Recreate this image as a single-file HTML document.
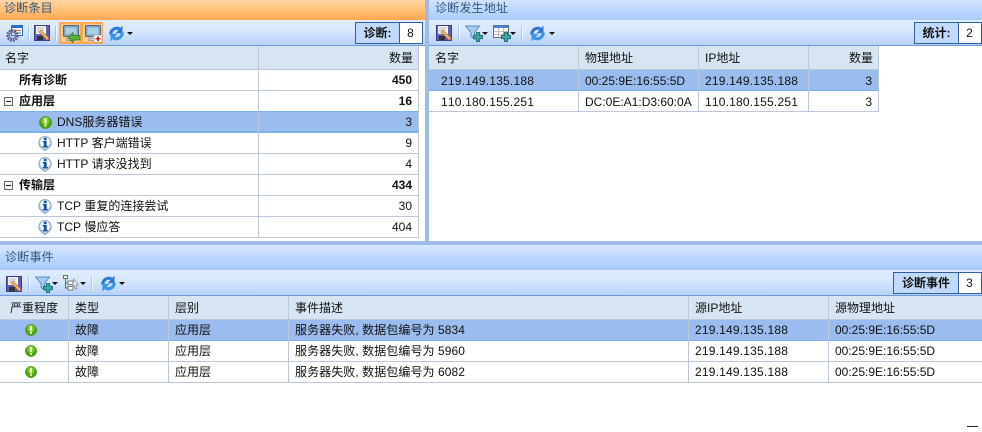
<!DOCTYPE html>
<html lang="zh"><head><meta charset="utf-8">
<style>
html,body{margin:0;padding:0;background:#fff;}
#p{position:relative;width:982px;height:432px;overflow:hidden;background:#fff;font:12px/21px "Liberation Sans","Noto Sans CJK SC","WenQuanYi Zen Hei",sans-serif;color:#111;font-kerning:none;}
#p div,#p svg{position:absolute;}
.tt{line-height:17px;color:#37577f;white-space:nowrap;font-size:12.2px;}
.tb{background:linear-gradient(#e0ecff,#d9e8fe 40%,#b6d2f8);border-bottom:1px solid #6d9ad8;}
.sep{width:1px;background:#a9c5ea;border-right:1px solid #f2f7ff;}
.t{white-space:nowrap;height:21px;}
.n{letter-spacing:.2px;}
.d{letter-spacing:.07px;}
.r{text-align:right;}
.b{font-weight:bold;}
.h{background:#d7e4f2;}
.ln{background:#bcc8da;height:1px;}
.vl{background:#bcc8da;width:1px;}
.sel{background:#9bbcee;}
.ar{width:0;height:0;border:3px solid transparent;border-top:3px solid #111;border-bottom:0;}
.box{border:1px solid #2f5f9f;box-sizing:border-box;background:#fff;}
.box .l{left:0;top:0;bottom:0;background:#c2dafa;border-right:1px solid #2f5f9f;text-align:center;font-weight:bold;line-height:20px;white-space:nowrap;}
.box .v{right:0;top:0;bottom:0;text-align:center;line-height:20px;}
</style></head><body>
<div id="p">
<svg width="0" height="0" style="left:0;top:0">
<defs>
<symbol id="save" viewBox="0 0 16 16"><rect x="0.5" y="0.5" width="15" height="15" fill="#6060b4" stroke="#3c3c84"/><rect x="2" y="1" width="10" height="8" fill="#f2f2f2"/><path d="M3 3h7M3 5h7M3 7h5" stroke="#aaa" stroke-width=".8"/><rect x="3" y="11" width="6" height="4" fill="#333"/><path d="M7 5l8.500 8.500-2 2L5 7z" fill="#e8b060" stroke="#a06020" stroke-width=".5"/><path d="M13.500 13.500l2 0 0 2z" fill="#d04040"/></symbol>
<symbol id="ref" viewBox="0 0 17 17"><path d="M2.800 9.500A6 6 0 0 1 11.500 3.900" fill="none" stroke="#2b79d4" stroke-width="3.200"/><path d="M14.500 .5V8.200H7.500z" fill="#2b79d4"/><path d="M14.200 7.500A6 6 0 0 1 5.500 13.100" fill="none" stroke="#3a94e6" stroke-width="3.200"/><path d="M2.500 16.500V8.800H9.500z" fill="#3a94e6"/></symbol>
<symbol id="plus" viewBox="0 0 9 9"><path d="M3 .5h3v2.500h2.500v3H6v2.500H3V6H.5V3H3z" fill="#3fa9a0" stroke="#16666a" stroke-width=".8"/></symbol>
<symbol id="fil" viewBox="0 0 18 17"><path d="M.5 1h14L9.500 7.500V14L6 11.500V7.500z" fill="#a4ccf2" stroke="#5a8cc4"/><use href="#plus" x="8" y="7" width="10" height="10"/></symbol>
<symbol id="tab" viewBox="0 0 18 17"><rect x=".5" y=".5" width="15" height="12" fill="#fff" stroke="#666"/><rect x=".5" y=".5" width="15" height="2.500" fill="#4a84d0"/><path d="M.5 6.500h15M.5 9.500h15M5.500 3v9.500M10.500 3v9.500" stroke="#aaa" stroke-width=".8"/><use href="#plus" x="8" y="7" width="10" height="10"/></symbol>
<symbol id="tree" viewBox="0 0 17 17"><rect x=".5" y=".5" width="4" height="3" fill="#fff" stroke="#3f8a3f"/><path d="M2.500 3.500V13H5M2.500 8H5" stroke="#3f8a3f" fill="none"/><rect x="5" y="6" width="5" height="3.500" fill="#fff" stroke="#777"/><rect x="5" y="11.500" width="5" height="3.500" fill="#fff" stroke="#777"/><path d="M10.500 4l5 6h-2.500l1 3.500-1.500.5-1-3.500-1.500 1.500z" fill="#eef" stroke="#888" stroke-width=".7"/></symbol>
<symbol id="gear" viewBox="0 0 17 17"><rect x="5.500" y=".5" width="11" height="10" fill="#f8f8ff" stroke="#2a72c8"/><rect x="5.500" y=".5" width="11" height="2.500" fill="#2a72c8"/><path d="M8 5.500h7" stroke="#e07030"/><path d="M8 8h7" stroke="#4aa060"/><circle cx="6.500" cy="10.500" r="4.800" fill="none" stroke="#5a5a8e" stroke-width="3" stroke-dasharray="1.800 .9"/><circle cx="6.500" cy="10.500" r="3.200" fill="none" stroke="#7c7cac" stroke-width="1.600"/></symbol>
<symbol id="mon" viewBox="0 0 18 18"><rect x=".5" y=".5" width="15" height="11" rx="1" fill="#7da4c0" stroke="#53687c"/><rect x="2.500" y="2.500" width="11" height="7" fill="#a6d0e4"/><path d="M6 11.500h4v2h2.500v2H3.500v-2H6z" fill="#c4ccd4" stroke="#66707c" stroke-width=".5"/></symbol>
<symbol id="info" viewBox="0 0 14 15"><path d="M7 .5a6.300 6.300 0 0 1 4 11L7 14.800 3 11.500A6.300 6.300 0 0 1 7 .5z" fill="#bcd0ea" stroke="#8ca6c8"/><circle cx="7" cy="6" r="4.800" fill="#f6f9fe"/><path d="M5.800 1.800h2.800v2.400H5.800zM4.800 5h3.900v5h1.100v1.400H4.800V10h1V6.400h-1z" fill="#17539f"/></symbol>
<symbol id="ok" viewBox="0 0 13 13"><circle cx="6.500" cy="6.500" r="6.200" fill="#47a610" stroke="#3a8c12" stroke-width=".4"/><circle cx="6.500" cy="4.800" r="4" fill="#7ccb3c"/><path d="M5.400 2.300h2.200v5.200H5.400zM5.400 8.500h2.200v2H5.400z" fill="#fbf8b0"/></symbol>
</defs></svg>

<!-- splitters -->
<div style="left:425px;top:0;width:4px;height:245px;background:#9dbde8"></div>
<div style="left:0;top:241px;width:982px;height:4px;background:#9dbde8"></div>

<!-- LEFT -->
<div class="tt" style="left:0;top:0;width:425px;height:20px;background:linear-gradient(#ffd6a6,#ffc078 50%,#ffa64f);padding-left:4px;box-sizing:border-box;">诊断条目</div>
<div class="tb" style="left:0;top:20px;width:425px;height:25px;"></div>
<svg style="left:6px;top:25px" width="17" height="17"><use href="#gear"/></svg>
<div class="sep" style="left:28px;top:26px;height:15px"></div>
<svg style="left:34px;top:25px" width="16" height="16"><use href="#save"/></svg>
<div class="sep" style="left:55px;top:26px;height:15px"></div>
<div style="left:59px;top:22px;width:44px;height:22px;background:#ffa94f"></div>
<div style="left:61px;top:24px;width:19px;height:18px;background:#ffcb8c"></div>
<div style="left:83px;top:24px;width:19px;height:18px;background:#ffcb8c"></div>
<svg style="left:63px;top:25px" width="18" height="18"><use href="#mon"/><path d="M5 12.500l5-5v3h7v4.500h-7v3z" fill="#5cb030" stroke="#2e7a18" stroke-width=".7"/></svg>
<svg style="left:85px;top:25px" width="18" height="18"><use href="#mon"/><rect x="9" y="10" width="8" height="7" fill="#fff" stroke="#999" stroke-width=".6"/><path d="M12 11.500h2v1.500h1.500v1.500H14V16h-2v-1.500h-1.500V13H12z" fill="#d82020"/></svg>
<svg style="left:108px;top:25px" width="17" height="17"><use href="#ref"/></svg>
<div class="ar" style="left:127px;top:32px"></div>
<div class="box" style="left:355px;top:22px;width:68px;height:22px;"><div class="l" style="width:43px">诊断:</div><div class="v" style="width:23px">8</div></div>

<div class="h" style="left:0;top:46px;width:418px;height:23px"></div>
<div class="t" style="left:5px;top:48px">名字</div>
<div class="t r" style="right:569px;top:48px">数量</div>
<div class="ln" style="left:0;top:69px;width:418px"></div>
<div class="ln" style="left:0;top:90px;width:418px"></div>
<div class="sel" style="left:0;top:111px;width:418px;height:21px;border-top:1px solid #7cb0ea;border-bottom:1px solid #7cb0ea;box-sizing:border-box;"></div>
<div class="ln" style="left:0;top:132px;width:418px;background:#7cb0ea"></div>
<div class="ln" style="left:0;top:153px;width:418px"></div>
<div class="ln" style="left:0;top:174px;width:418px"></div>
<div class="ln" style="left:0;top:195px;width:418px"></div>
<div class="ln" style="left:0;top:216px;width:418px"></div>
<div class="ln" style="left:0;top:237px;width:418px"></div>
<div class="vl" style="left:258px;top:46px;height:191px"></div>
<div class="vl" style="left:418px;top:46px;height:192px"></div>

<div class="t b" style="left:19px;top:70px">所有诊断</div><div class="t r b" style="right:570px;top:70px">450</div>
<div style="left:4px;top:97px;width:7px;height:7px;border:1px solid #666;background:#f4f4f4"></div><div style="left:6px;top:101px;width:5px;height:1px;background:#222"></div>
<div class="t b" style="left:19px;top:91px">应用层</div><div class="t r b" style="right:570px;top:91px">16</div>
<svg style="left:39px;top:116px" width="13" height="13"><use href="#ok"/></svg>
<div class="t" style="left:57px;top:112px">DNS服务器错误</div><div class="t r" style="right:570px;top:112px">3</div>
<svg style="left:38px;top:136px" width="14" height="15"><use href="#info"/></svg>
<div class="t" style="left:57px;top:133px">HTTP 客户端错误</div><div class="t r" style="right:570px;top:133px">9</div>
<svg style="left:38px;top:157px" width="14" height="15"><use href="#info"/></svg>
<div class="t" style="left:57px;top:154px">HTTP 请求没找到</div><div class="t r" style="right:570px;top:154px">4</div>
<div style="left:4px;top:181px;width:7px;height:7px;border:1px solid #666;background:#f4f4f4"></div><div style="left:6px;top:185px;width:5px;height:1px;background:#222"></div>
<div class="t b" style="left:19px;top:175px">传输层</div><div class="t r b" style="right:570px;top:175px">434</div>
<svg style="left:38px;top:199px" width="14" height="15"><use href="#info"/></svg>
<div class="t" style="left:57px;top:196px">TCP 重复的连接尝试</div><div class="t r" style="right:570px;top:196px">30</div>
<svg style="left:38px;top:220px" width="14" height="15"><use href="#info"/></svg>
<div class="t" style="left:57px;top:217px">TCP 慢应答</div><div class="t r" style="right:570px;top:217px">404</div>

<!-- RIGHT -->
<div class="tt" style="left:429px;top:0;width:553px;height:20px;background:linear-gradient(#d2e4fd,#bcd7fc 50%,#a9cbfb);padding-left:6px;box-sizing:border-box;">诊断发生地址</div>
<div class="tb" style="left:429px;top:20px;width:553px;height:25px;"></div>
<svg style="left:436px;top:25px" width="16" height="16"><use href="#save"/></svg>
<div class="sep" style="left:458px;top:26px;height:15px"></div>
<svg style="left:465px;top:25px" width="18" height="17"><use href="#fil"/></svg>
<div class="ar" style="left:482px;top:32px"></div>
<svg style="left:493px;top:25px" width="18" height="17"><use href="#tab"/></svg>
<div class="ar" style="left:510px;top:32px"></div>
<div class="sep" style="left:521px;top:26px;height:15px"></div>
<svg style="left:529px;top:25px" width="17" height="17"><use href="#ref"/></svg>
<div class="ar" style="left:549px;top:32px"></div>
<div class="box" style="left:914px;top:22px;width:68px;height:22px;"><div class="l" style="width:43px">统计:</div><div class="v" style="width:23px">2</div></div>

<div class="h" style="left:429px;top:46px;width:450px;height:23px"></div>
<div class="t" style="left:435px;top:48px">名字</div>
<div class="t" style="left:585px;top:48px">物理地址</div>
<div class="t" style="left:705px;top:48px">IP地址</div>
<div class="t r" style="right:109px;top:48px">数量</div>
<div class="ln" style="left:429px;top:69px;width:450px"></div>
<div class="sel" style="left:429px;top:70px;width:450px;height:20px"></div>
<div class="ln" style="left:429px;top:90px;width:450px;background:#7cb0ea"></div>
<div class="ln" style="left:429px;top:111px;width:450px"></div>
<div class="vl" style="left:578px;top:46px;height:65px"></div>
<div class="vl" style="left:698px;top:46px;height:65px"></div>
<div class="vl" style="left:808px;top:46px;height:65px"></div>
<div class="vl" style="left:878px;top:46px;height:66px"></div>
<div class="t n" style="left:441px;top:71px">219.149.135.188</div><div class="t" style="left:585px;top:71px">00:25:9E:16:55:5D</div><div class="t n" style="left:705px;top:71px">219.149.135.188</div><div class="t r" style="right:110px;top:71px">3</div>
<div class="t n" style="left:441px;top:92px">110.180.155.251</div><div class="t" style="left:585px;top:92px">DC:0E:A1:D3:60:0A</div><div class="t n" style="left:705px;top:92px">110.180.155.251</div><div class="t r" style="right:110px;top:92px">3</div>

<!-- BOTTOM -->
<div class="tt" style="left:0;top:245px;width:982px;height:25px;line-height:25px;background:linear-gradient(#d8e7fe,#bcd7fc 50%,#a9cbfb);padding-left:5px;box-sizing:border-box;">诊断事件</div>
<div class="tb" style="left:0;top:270px;width:982px;height:25px;"></div>
<svg style="left:6px;top:276px" width="16" height="16"><use href="#save"/></svg>
<div class="sep" style="left:28px;top:276px;height:15px"></div>
<svg style="left:35px;top:276px" width="18" height="17"><use href="#fil"/></svg>
<div class="ar" style="left:52px;top:282px"></div>
<svg style="left:63px;top:275px" width="17" height="17"><use href="#tree"/></svg>
<div class="ar" style="left:80px;top:282px"></div>
<div class="sep" style="left:91px;top:276px;height:15px"></div>
<svg style="left:100px;top:275px" width="17" height="17"><use href="#ref"/></svg>
<div class="ar" style="left:119px;top:282px"></div>
<div class="box" style="left:893px;top:272px;width:89px;height:22px;"><div class="l" style="width:64px">诊断事件</div><div class="v" style="width:23px">3</div></div>

<div class="h" style="left:0;top:296px;width:982px;height:23px"></div>
<div class="t" style="left:10px;top:298px">严重程度</div>
<div class="t" style="left:75px;top:298px">类型</div>
<div class="t" style="left:175px;top:298px">层别</div>
<div class="t" style="left:295px;top:298px">事件描述</div>
<div class="t" style="left:695px;top:298px">源IP地址</div>
<div class="t" style="left:835px;top:298px">源物理地址</div>
<div class="ln" style="left:0;top:319px;width:982px"></div>
<div class="sel" style="left:0;top:320px;width:982px;height:20px"></div>
<div class="ln" style="left:0;top:340px;width:982px;background:#7cb0ea"></div>
<div class="ln" style="left:0;top:361px;width:982px"></div>
<div class="ln" style="left:0;top:382px;width:982px"></div>
<div class="vl" style="left:68px;top:296px;height:86px"></div>
<div class="vl" style="left:168px;top:296px;height:86px"></div>
<div class="vl" style="left:288px;top:296px;height:86px"></div>
<div class="vl" style="left:688px;top:296px;height:86px"></div>
<div class="vl" style="left:828px;top:296px;height:86px"></div>

<svg style="left:25px;top:324px" width="12" height="12"><use href="#ok"/></svg>
<div class="t" style="left:75px;top:320px">故障</div><div class="t" style="left:175px;top:320px">应用层</div><div class="t d" style="left:295px;top:320px">服务器失败, 数据包编号为 5834</div><div class="t n" style="left:695px;top:320px">219.149.135.188</div><div class="t" style="left:835px;top:320px">00:25:9E:16:55:5D</div>
<svg style="left:25px;top:345px" width="12" height="12"><use href="#ok"/></svg>
<div class="t" style="left:75px;top:341px">故障</div><div class="t" style="left:175px;top:341px">应用层</div><div class="t d" style="left:295px;top:341px">服务器失败, 数据包编号为 5960</div><div class="t n" style="left:695px;top:341px">219.149.135.188</div><div class="t" style="left:835px;top:341px">00:25:9E:16:55:5D</div>
<svg style="left:25px;top:366px" width="12" height="12"><use href="#ok"/></svg>
<div class="t" style="left:75px;top:362px">故障</div><div class="t" style="left:175px;top:362px">应用层</div><div class="t d" style="left:295px;top:362px">服务器失败, 数据包编号为 6082</div><div class="t n" style="left:695px;top:362px">219.149.135.188</div><div class="t" style="left:835px;top:362px">00:25:9E:16:55:5D</div>

<div style="left:967px;top:426px;width:11px;height:1px;background:#222"></div>
</div>
</body></html>
